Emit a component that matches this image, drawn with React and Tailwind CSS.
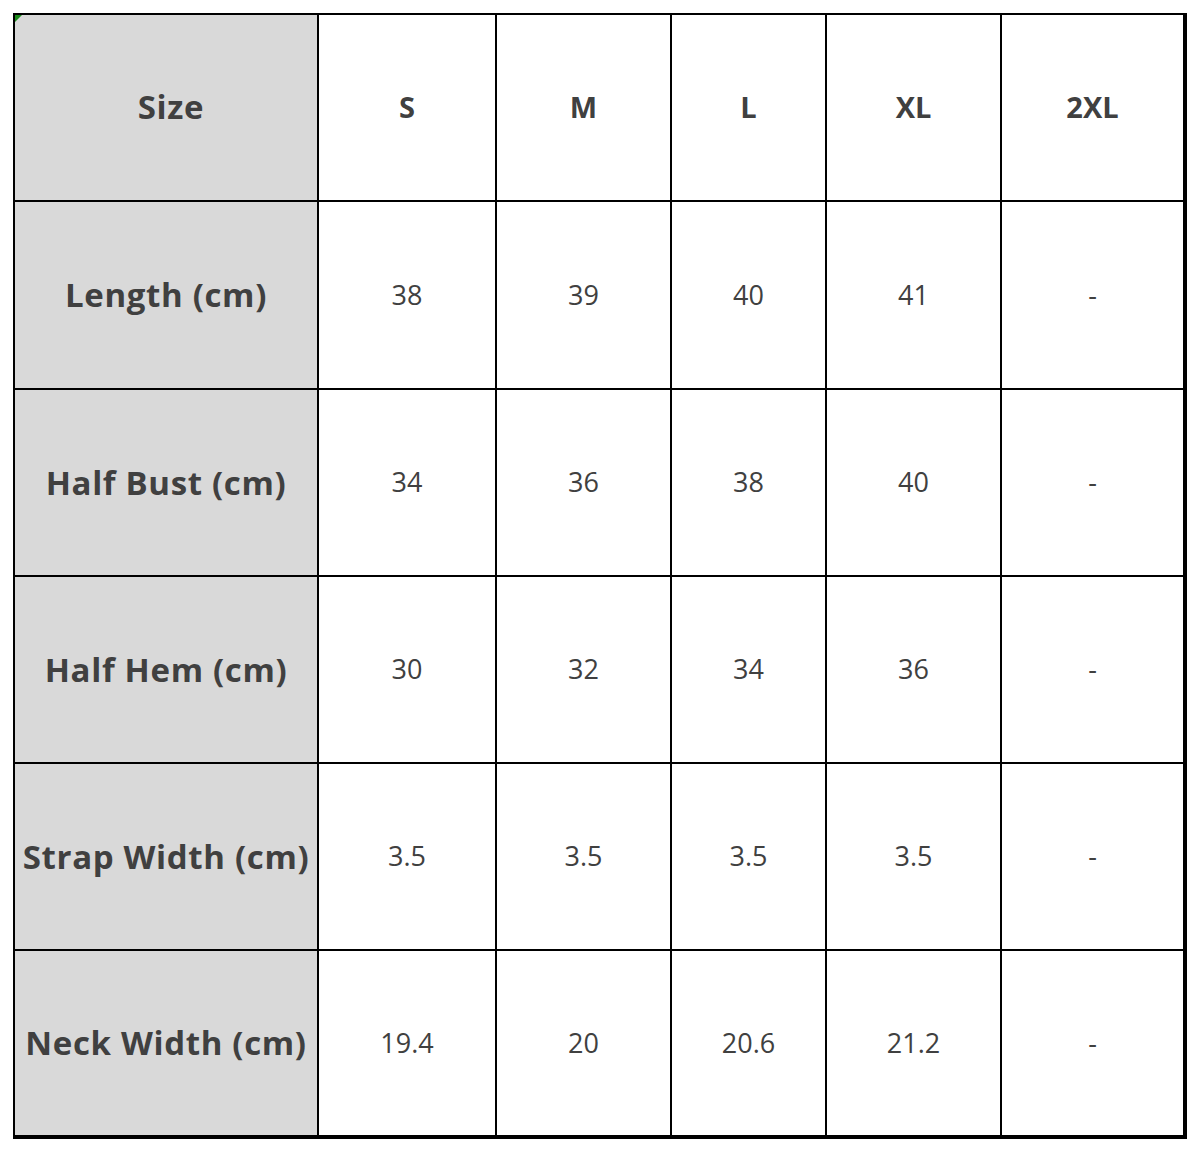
import React from 'react'

const sizes = ['S', 'M', 'L', 'XL', '2XL']

const rows = [
  { label: 'Length (cm)', values: ['38', '39', '40', '41', '-'] },
  { label: 'Half Bust (cm)', values: ['34', '36', '38', '40', '-'] },
  { label: 'Half Hem (cm)', values: ['30', '32', '34', '36', '-'] },
  { label: 'Strap Width (cm)', values: ['3.5', '3.5', '3.5', '3.5', '-'] },
  { label: 'Neck Width (cm)', values: ['19.4', '20', '20.6', '21.2', '-'] },
]

export default function App() {
  return (
    <div className="w-[1200px] h-[1151px] bg-white pt-[13px] pl-[13px] font-['Open_Sans','Liberation_Sans',sans-serif] text-[#404040]">
      <div className="relative w-[1174px] h-[1126px] border-t-2 border-l-2 border-r-4 border-b-4 border-black">
        <div className="grid h-full grid-cols-[302px_176px_173px_153px_173px_181px] grid-rows-[185px_186px_185px_185px_185px_184px] gap-[2px] bg-black">
          <div className="flex items-center justify-center bg-[#d9d9d9] pl-[10px] pb-[2px] text-[33px] tracking-[0.02em] font-bold">Size</div>
          {sizes.map((s) => (
            <div key={s} className="flex items-center justify-center bg-white pb-[2px] text-[29px] font-bold">
              {s}
            </div>
          ))}
          {rows.map((r) => (
            <React.Fragment key={r.label}>
              <div className="flex items-center justify-center bg-[#d9d9d9] text-[33px] tracking-[0.02em] font-bold whitespace-nowrap">
                {r.label}
              </div>
              {r.values.map((v, i) => (
                <div key={i} className="flex items-center justify-center bg-white text-[27px]">
                  {v}
                </div>
              ))}
            </React.Fragment>
          ))}
        </div>
        <svg className="absolute left-0 top-0" width="7" height="7" viewBox="0 0 7 7">
          <polygon points="0,0 7,0 0,7" fill="#1a8a1a" />
        </svg>
      </div>
    </div>
  )
}
